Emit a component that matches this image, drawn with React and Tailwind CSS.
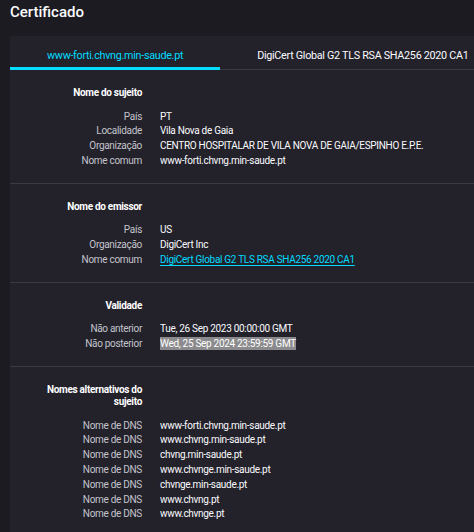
import React from 'react';

const sections = [
  {
    title: 'Nome do sujeito',
    rows: [
      ['País', 'PT'],
      ['Localidade', 'Vila Nova de Gaia'],
      ['Organização', 'CENTRO HOSPITALAR DE VILA NOVA DE GAIA/ESPINHO E.P.E.'],
      ['Nome comum', 'www-forti.chvng.min-saude.pt'],
    ],
  },
  {
    title: 'Nome do emissor',
    rows: [
      ['País', 'US'],
      ['Organização', 'DigiCert Inc'],
      ['Nome comum', 'DigiCert Global G2 TLS RSA SHA256 2020 CA1', 'link'],
    ],
  },
  {
    title: 'Validade',
    rows: [
      ['Não anterior', 'Tue, 26 Sep 2023 00:00:00 GMT'],
      ['Não posterior', 'Wed, 25 Sep 2024 23:59:59 GMT', 'selected'],
    ],
  },
  {
    title: 'Nomes alternativos do sujeito',
    rows: [
      ['Nome de DNS', 'www-forti.chvng.min-saude.pt'],
      ['Nome de DNS', 'www.chvng.min-saude.pt'],
      ['Nome de DNS', 'chvng.min-saude.pt'],
      ['Nome de DNS', 'www.chvnge.min-saude.pt'],
      ['Nome de DNS', 'chvnge.min-saude.pt'],
      ['Nome de DNS', 'www.chvng.pt'],
      ['Nome de DNS', 'www.chvnge.pt'],
    ],
  },
];

const Value = ({ text, kind }) => {
  if (kind === 'link') {
    return <span className="text-[#00ddff] underline underline-offset-2">{text}</span>;
  }
  if (kind === 'selected') {
    return <span className="bg-[#8b8b8e] py-[1px] text-white">{text}</span>;
  }
  return <span>{text}</span>;
};

const Section = ({ title, rows }) => (
  <section className="border-b border-[#3a3944] pl-[32px] pt-[17px] pb-[14px]">
    <div className="grid grid-cols-[100px_1fr] gap-x-[18px]">
      <h2 className="text-right font-bold leading-[12.5px] text-white">{title}</h2>
      <div />
    </div>
    <div className="mt-[10px] grid grid-cols-[100px_1fr] gap-x-[18px] leading-[14.8px]">
      {rows.map(([label, value, kind], i) => (
        <React.Fragment key={i}>
          <div className="whitespace-nowrap text-right text-[#c4c4cc]">{label}</div>
          <div className="whitespace-nowrap text-[#fbfbfe]">
            <Value text={value} kind={kind} />
          </div>
        </React.Fragment>
      ))}
    </div>
  </section>
);

export default function App() {
  return (
    <div className="h-[532px] overflow-hidden bg-[#1c1b22] font-['Roboto',Arial,sans-serif] text-[10px] tracking-[-0.3px] text-[#fbfbfe]">
      <h1 className="h-[36px] px-[10px] pt-[2px] text-[15px] font-medium leading-[20px] tracking-normal">Certificado</h1>

      <div className="ml-[10px] w-[620px] bg-[#23222b]">
        {/* abas */}
        <div className="flex border-b border-[#3a3944] text-[10.8px] leading-[15px]">
          <div className="-mb-px h-[34px] border-b-[3px] border-[#00ddff] px-[37px] pt-[12px] text-[#00ddff]">
            www-forti.chvng.min-saude.pt
          </div>
          <div className="h-[33px] px-[37px] pt-[12px] text-[#fbfbfe]">
            DigiCert Global G2 TLS RSA SHA256 2020 CA1
          </div>
        </div>

        {sections.map((s) => (
          <Section key={s.title} title={s.title} rows={s.rows} />
        ))}
      </div>
    </div>
  );
}
